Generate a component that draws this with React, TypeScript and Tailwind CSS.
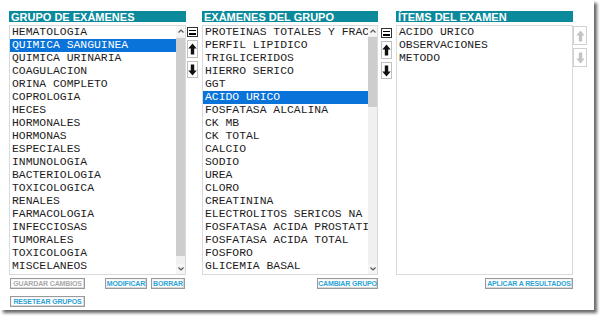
import React from "react";

const mono = { fontFamily: '"Liberation Mono", "Courier New", monospace' };
const sans = { fontFamily: '"Liberation Sans", Arial, sans-serif' };

function Chevron({ up }: { up?: boolean }) {
  return (
    <svg width="6" height="4" viewBox="0 0 6 4">
      <path d={up ? "M0.5 3.5 L3 1 L5.5 3.5" : "M0.5 0.5 L3 3 L5.5 0.5"} stroke="#555" strokeWidth="1.2" fill="none" />
    </svg>
  );
}

function Scrollbar({ thumbTop, thumbHeight }: { thumbTop: number; thumbHeight: number }) {
  return (
    <div className="w-[9px] h-full flex flex-col bg-[#f0f0f0] shrink-0">
      <div className="h-[10px] flex items-center justify-center bg-[#f5f5f5]">
        <Chevron up />
      </div>
      <div className="flex-1 relative">
        <div className="absolute left-0 right-0 bg-[#cdcdcd]" style={{ top: thumbTop, height: thumbHeight }} />
      </div>
      <div className="h-[10px] flex items-center justify-center bg-[#f5f5f5]">
        <Chevron />
      </div>
    </div>
  );
}

function ListBox({
  items,
  selected,
  scroll,
}: {
  items: string[];
  selected?: number;
  scroll?: { top: number; height: number };
}) {
  return (
    <div className="h-[250px] border border-[#d6dbe0] bg-white flex overflow-hidden">
      <div className="flex-1 min-w-0 overflow-hidden">
        {items.map((t, i) => (
          <div
            key={t}
            className={
              "h-[13px] leading-[13px] text-[11.4px] whitespace-nowrap overflow-hidden pl-[2px] " +
              (i === selected ? "bg-[#0a73d9] text-white" : "text-[#1c1c1c]")
            }
            style={mono}
          >
            {t}
          </div>
        ))}
      </div>
      {scroll && <Scrollbar thumbTop={scroll.top} thumbHeight={scroll.height} />}
    </div>
  );
}

function Header({ title }: { title: string }) {
  return (
    <div
      className="h-[11px] bg-[#0b8a9c] text-white text-[11px] font-bold pl-[2px] mb-[3px] whitespace-nowrap overflow-hidden"
      style={sans}
    >
      <span className="block leading-[11px] relative top-[1px]">{title}</span>
    </div>
  );
}

function EqButton() {
  return (
    <div className="w-[11px] h-[10px] border border-[#333] bg-white flex flex-col justify-center items-center gap-[2px]">
      <div className="w-[7px] h-[1.5px] bg-black" />
      <div className="w-[7px] h-[1.5px] bg-black" />
    </div>
  );
}

function Arrow({ down, disabled, w = 11, h = 18 }: { down?: boolean; disabled?: boolean; w?: number; h?: number }) {
  const color = disabled ? "#c4c4c4" : "#111";
  return (
    <div
      className={"flex items-center justify-center bg-white border " + (disabled ? "border-[#d0d0d0]" : "border-[#c0c0c0]")}
      style={{ width: w, height: h }}
    >
      <svg width="9" height="12" viewBox="0 0 9 12" style={{ transform: down ? "rotate(180deg)" : undefined }}>
        <path d="M4.5 0.5 L8.7 5.5 L6.2 5.5 L6.2 11.5 L2.8 11.5 L2.8 5.5 L0.3 5.5 Z" fill={color} />
      </svg>
    </div>
  );
}

function Btn({ label, w, disabled }: { label: string; w: number; disabled?: boolean }) {
  return (
    <div
      className={
        "h-[11px] flex items-center justify-center whitespace-nowrap overflow-hidden border border-[#9a9a9a] shadow-[inset_-1px_-1px_0_#d8d8d8,inset_1px_1px_0_#f4f4f4] bg-white text-[7px] font-bold leading-none tracking-[-0.15px] " +
        (disabled ? "text-[#a8a8a8]" : "text-[#2ca3d6]")
      }
      style={{ width: w, ...sans }}
    >
      {label}
    </div>
  );
}

function SideButtons({ mt }: { mt: number }) {
  return (
    <div className="w-[11px] flex flex-col gap-[3px] shrink-0" style={{ marginTop: mt }}>
      <EqButton />
      <Arrow />
      <Arrow down h={17} />
    </div>
  );
}

const grupos = [
  "HEMATOLOGIA",
  "QUIMICA SANGUINEA",
  "QUIMICA URINARIA",
  "COAGULACION",
  "ORINA COMPLETO",
  "COPROLOGIA",
  "HECES",
  "HORMONALES",
  "HORMONAS",
  "ESPECIALES",
  "INMUNOLOGIA",
  "BACTERIOLOGIA",
  "TOXICOLOGICA",
  "RENALES",
  "FARMACOLOGIA",
  "INFECCIOSAS",
  "TUMORALES",
  "TOXICOLOGIA",
  "MISCELANEOS",
];

const examenes = [
  "PROTEINAS TOTALES Y FRACCIONES",
  "PERFIL LIPIDICO",
  "TRIGLICERIDOS",
  "HIERRO SERICO",
  "GGT",
  "ACIDO URICO",
  "FOSFATASA ALCALINA",
  "CK MB",
  "CK TOTAL",
  "CALCIO",
  "SODIO",
  "UREA",
  "CLORO",
  "CREATININA",
  "ELECTROLITOS SERICOS NA K CL",
  "FOSFATASA ACIDA PROSTATICA",
  "FOSFATASA ACIDA TOTAL",
  "FOSFORO",
  "GLICEMIA BASAL",
];

const items = ["ACIDO URICO", "OBSERVACIONES", "METODO"];

export default function App() {
  return (
    <div className="w-[600px] h-[318px] bg-white">
      <div className="w-[594px] h-[310px] bg-white shadow-[3px_3px_3px_rgba(0,0,0,0.6)] pt-[11px] pl-[9px]">
        <div className="flex items-start">
          {/* Column 1 */}
          <div className="w-[177px] shrink-0">
            <Header title="GRUPO DE EXÁMENES" />
            <ListBox items={grupos} selected={1} scroll={{ top: 2, height: 218 }} />
            <div className="flex mt-[3px] pl-[1px]">
              <Btn label="GUARDAR CAMBIOS" w={75} disabled />
              <div className="ml-[20px]">
                <Btn label="MODIFICAR" w={42} />
              </div>
              <div className="ml-[4px]">
                <Btn label="BORRAR" w={34} />
              </div>
            </div>
            <div className="mt-[7px] pl-[1px]">
              <Btn label="RESETEAR GRUPOS" w={75} />
            </div>
          </div>
          <div className="ml-[1px]">
            <SideButtons mt={16} />
          </div>

          {/* Column 2 */}
          <div className="w-[176px] shrink-0 ml-[4px]">
            <Header title="EXÁMENES DEL GRUPO" />
            <ListBox items={examenes} selected={5} scroll={{ top: 1, height: 70 }} />
            <div className="flex justify-end mt-[3px]">
              <Btn label="CAMBIAR GRUPO" w={61} />
            </div>
          </div>
          <div className="ml-[3px]">
            <SideButtons mt={17} />
          </div>

          {/* Column 3 */}
          <div className="w-[177px] shrink-0 ml-[4px]">
            <Header title="ÍTEMS DEL EXAMEN" />
            <ListBox items={items} />
            <div className="flex justify-end mt-[3px]">
              <Btn label="APLICAR A RESULTADOS" w={88} />
            </div>
          </div>
          <div className="flex flex-col gap-[3px] mt-[15px]">
            <Arrow disabled w={14} h={19} />
            <Arrow disabled down w={14} h={19} />
          </div>
        </div>
      </div>
    </div>
  );
}
